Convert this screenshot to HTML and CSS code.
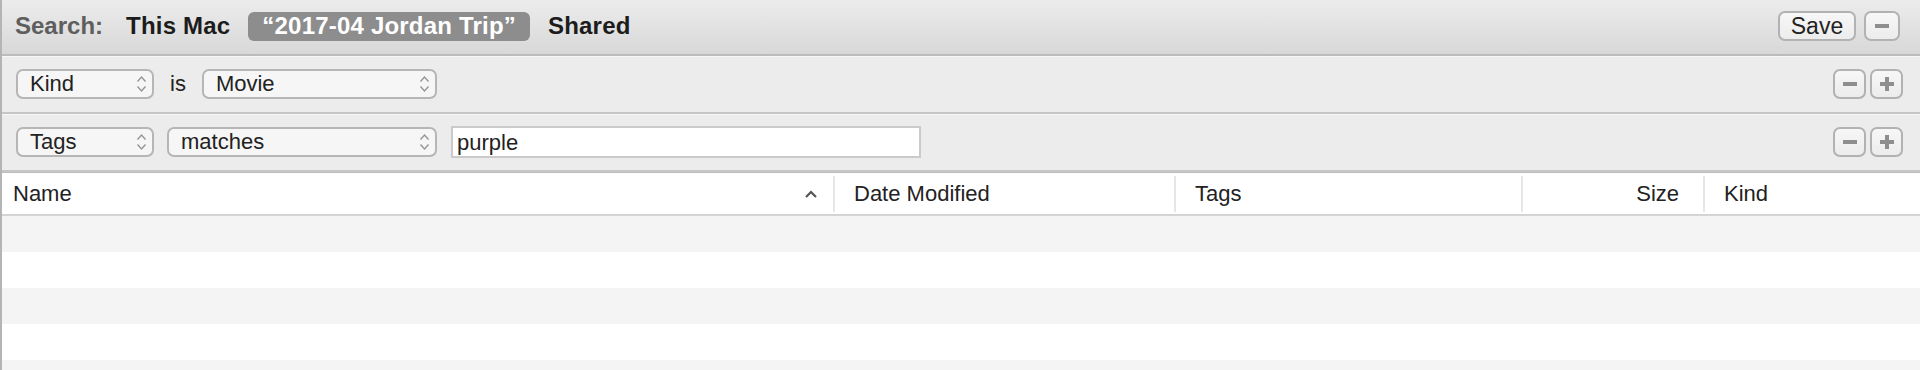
FILE: index.html
```html
<!DOCTYPE html>
<html lang="en">
<head>
  <meta charset="UTF-8">
  <title>Finder Search</title>
  <link rel="stylesheet" href="styles.css">
</head>
<body>
  <div class="window">

    <!-- Search scope bar -->
    <div class="search-bar">
      <span class="search-label">Search:</span>
      <span class="scope">This Mac</span>
      <span class="scope active">&ldquo;2017-04 Jordan Trip&rdquo;</span>
      <span class="scope">Shared</span>
      <div class="spacer"></div>
      <button class="btn save-btn">Save</button>
      <button class="btn icon-btn wide">
        <svg width="16" height="16" viewBox="0 0 16 16"><rect x="1" y="6" width="14" height="4" fill="#8e8e8e"/></svg>
      </button>
    </div>

    <!-- Criteria rows -->
    <div class="criteria-row">
      <div class="popup w-attr">Kind
        <svg class="chev" width="11" height="20" viewBox="0 0 11 20"><path d="M1.5 7.5 L5.5 3 L9.5 7.5 M1.5 12.5 L5.5 17 L9.5 12.5" fill="none" stroke="#959595" stroke-width="1.4"/></svg>
      </div>
      <span class="op-label">is</span>
      <div class="popup w-value">Movie
        <svg class="chev" width="11" height="20" viewBox="0 0 11 20"><path d="M1.5 7.5 L5.5 3 L9.5 7.5 M1.5 12.5 L5.5 17 L9.5 12.5" fill="none" stroke="#959595" stroke-width="1.4"/></svg>
      </div>
      <div class="spacer"></div>
      <button class="btn icon-btn">
        <svg width="16" height="16" viewBox="0 0 16 16"><rect x="1" y="6" width="14" height="4" fill="#8e8e8e"/></svg>
      </button>
      <button class="btn icon-btn">
        <svg width="16" height="16" viewBox="0 0 16 16"><rect x="1" y="6" width="14" height="4" fill="#8e8e8e"/><rect x="6" y="1" width="4" height="14" fill="#8e8e8e"/></svg>
      </button>
    </div>

    <div class="criteria-row">
      <div class="popup w-attr">Tags
        <svg class="chev" width="11" height="20" viewBox="0 0 11 20"><path d="M1.5 7.5 L5.5 3 L9.5 7.5 M1.5 12.5 L5.5 17 L9.5 12.5" fill="none" stroke="#959595" stroke-width="1.4"/></svg>
      </div>
      <div class="popup w-op">matches
        <svg class="chev" width="11" height="20" viewBox="0 0 11 20"><path d="M1.5 7.5 L5.5 3 L9.5 7.5 M1.5 12.5 L5.5 17 L9.5 12.5" fill="none" stroke="#959595" stroke-width="1.4"/></svg>
      </div>
      <input class="text-field" type="text" value="purple">
      <div class="spacer"></div>
      <button class="btn icon-btn">
        <svg width="16" height="16" viewBox="0 0 16 16"><rect x="1" y="6" width="14" height="4" fill="#8e8e8e"/></svg>
      </button>
      <button class="btn icon-btn">
        <svg width="16" height="16" viewBox="0 0 16 16"><rect x="1" y="6" width="14" height="4" fill="#8e8e8e"/><rect x="6" y="1" width="4" height="14" fill="#8e8e8e"/></svg>
      </button>
    </div>

    <!-- Results list -->
    <div class="list">
      <div class="list-header">
        <div class="col col-name">Name
          <svg class="sort-caret" width="14" height="10" viewBox="0 0 14 10"><path d="M2 8 L7 3 L12 8" fill="none" stroke="#555" stroke-width="2.2"/></svg>
        </div>
        <div class="col col-date">Date Modified</div>
        <div class="col col-tags">Tags</div>
        <div class="col col-size">Size</div>
        <div class="col col-kind">Kind</div>
      </div>
      <div class="list-row"></div>
      <div class="list-row"></div>
      <div class="list-row"></div>
      <div class="list-row"></div>
      <div class="list-row"></div>
    </div>

  </div>
</body>
</html>
```

FILE: styles.css
```css
* {
  margin: 0;
  padding: 0;
  box-sizing: border-box;
}

body {
  font-family: "Liberation Sans", Arial, sans-serif;
  background-color: #fff;
  color: #222;
  overflow: hidden;
}

.window {
  border-left: 2px solid #b4b4b4;
  height: 370px;
  overflow: hidden;
}

.spacer {
  flex: 1;
}

/* Search scope bar */
.search-bar {
  display: flex;
  align-items: center;
  height: 56px;
  padding: 0 20px 2px 13px;
  background: linear-gradient(#ececec, #d8d8d8);
  border-bottom: 2px solid #bcbcbc;
}

.search-label {
  font-size: 24px;
  font-weight: bold;
  color: #5e5e5e;
  margin-right: 9px;
}

.scope {
  display: inline-flex;
  align-items: center;
  height: 29px;
  padding: 0 14px;
  margin-right: 4px;
  font-size: 24px;
  font-weight: bold;
  letter-spacing: 0.2px;
  color: #1c1c1c;
  border-radius: 6px;
}

.scope.active {
  background-color: #8d8d8d;
  color: #fff;
}

/* Buttons */
.btn {
  display: inline-flex;
  align-items: center;
  justify-content: center;
  height: 30px;
  border: 2px solid #b2b2b2;
  border-radius: 7px;
  background: linear-gradient(#f7f7f7, #ececec);
  font-family: "Liberation Sans", Arial, sans-serif;
}

.save-btn {
  width: 78px;
  font-size: 23px;
  color: #222;
  margin-right: 8px;
}

.icon-btn {
  width: 33px;
  margin-left: 4px;
}

.icon-btn.wide {
  width: 36px;
  margin-left: 0;
}

/* Criteria rows */
.criteria-row {
  display: flex;
  align-items: center;
  height: 58px;
  padding: 0 17px 2px 14px;
  background-color: #ececec;
  border-top: 1px solid #f7f7f7;
  border-bottom: 2px solid #c6c6c6;
}

.popup {
  display: flex;
  align-items: center;
  height: 30px;
  padding-left: 12px;
  font-size: 22px;
  color: #222;
  background-color: #f6f6f6;
  border: 2px solid #b6b6b6;
  border-radius: 7px;
}

.popup .chev {
  margin-left: auto;
  margin-right: 5px;
}

.w-attr {
  width: 138px;
}

.w-value {
  width: 235px;
}

.w-op {
  width: 270px;
  margin-left: 13px;
}

.op-label {
  font-size: 22px;
  margin: 0 16px;
}

.text-field {
  width: 470px;
  height: 32px;
  margin-left: 14px;
  padding: 2px 4px 0;
  border: 2px solid #cacaca;
  background-color: #fff;
  font-family: "Liberation Sans", Arial, sans-serif;
  font-size: 22px;
  color: #222;
  outline: none;
}

/* Results list */
.list-header {
  display: flex;
  height: 44px;
  padding: 3px 0 1px;
  background-color: #fff;
  border-top: 1px solid #bdbdbd;
  border-bottom: 2px solid #d4d4d4;
}

.col {
  display: flex;
  align-items: center;
  height: 36px;
  font-size: 22px;
  color: #222;
  padding-left: 19px;
  border-left: 2px solid #e6e6e6;
}

.col-name {
  width: 831px;
  padding-left: 11px;
  padding-right: 15px;
  border-left: none;
}

.sort-caret {
  margin-left: auto;
}

.col-date {
  width: 341px;
}

.col-tags {
  width: 347px;
}

.col-size {
  width: 182px;
  justify-content: flex-end;
  padding-right: 24px;
}

.col-kind {
  flex: 1;
}

.list-row {
  height: 36px;
  background-color: #fff;
}

.list-row:nth-child(even) {
  background-color: #f4f4f4;
}
```
